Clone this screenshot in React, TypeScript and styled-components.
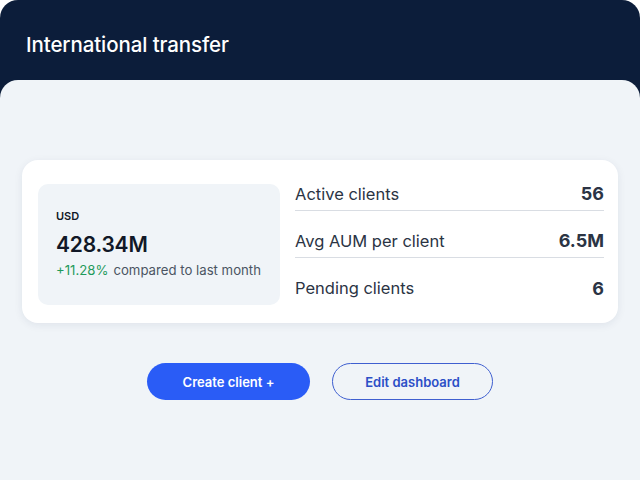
import styled, { createGlobalStyle } from "styled-components";

const GlobalStyle = createGlobalStyle`
  html, body {
    margin: 0;
    padding: 0;
    background: #ffffff;
  }
  body {
    font-family: Inter, "Noto Sans", sans-serif;
  }
`;

const Frame = styled.div`
  width: 640px;
  height: 480px;
  background: #0c1d3a;
  border-radius: 18px 18px 0 0;
  display: flex;
  flex-direction: column;
  overflow: hidden;
`;

const Header = styled.header`
  height: 80px;
  box-sizing: border-box;
  padding: 32px 26px 0;
`;

const Title = styled.h1`
  margin: 0;
  color: #ffffff;
  font-size: 20.5px;
  font-weight: 500;
  letter-spacing: -0.1px;
`;

const Panel = styled.main`
  flex: 1;
  background: #f0f4f8;
  border-radius: 18px 18px 0 0;
  padding: 80px 22px 0;
  display: flex;
  flex-direction: column;
  align-items: center;
`;

const Card = styled.section`
  align-self: stretch;
  height: 163px;
  box-sizing: border-box;
  background: #ffffff;
  border-radius: 16px;
  box-shadow: 0 2px 8px rgba(20, 40, 80, 0.08);
  padding: 24px 14px 26px 16px;
  display: grid;
  grid-template-columns: 242px 1fr;
  gap: 15px;
`;

const Balance = styled.div`
  background: #f0f4f8;
  border-radius: 10px;
  padding: 0 0 2px 18px;
  display: flex;
  flex-direction: column;
  justify-content: center;
`;

const Currency = styled.div`
  font-size: 11px;
  font-weight: 600;
  color: #111827;
`;

const Amount = styled.div`
  margin-top: 9px;
  font-size: 21px;
  font-weight: 600;
  color: #111827;
  letter-spacing: -0.2px;
`;

const Change = styled.div`
  margin-top: 5px;
  font-size: 13.2px;
  white-space: nowrap;
  color: #4b5563;
`;

const Up = styled.span`
  color: #1f9a5c;
  margin-right: 5px;
`;

const Stats = styled.ul`
  list-style: none;
  margin: -20px 0 0;
  padding: 0;
  display: flex;
  flex-direction: column;
`;

const StatRow = styled.li<{ $last?: boolean }>`
  height: 47px;
  box-sizing: border-box;
  padding-top: 13px;
  display: flex;
  align-items: center;
  justify-content: space-between;
  border-bottom: ${(p) => (p.$last ? "none" : "1.5px solid #d9dde3")};
  font-size: 16.5px;
  color: #2b3444;
`;

const StatValue = styled.span`
  font-size: 18px;
  font-weight: 700;
  color: #2b3444;
`;

const Actions = styled.div`
  margin-top: 40px;
  display: flex;
  gap: 22px;
`;

const Button = styled.button<{ $primary?: boolean }>`
  width: ${(p) => (p.$primary ? "163px" : "161px")};
  height: 37px;
  border-radius: 999px;
  font-family: inherit;
  font-size: 13px;
  font-weight: 600;
  cursor: pointer;
  background: ${(p) => (p.$primary ? "#2a5cf6" : "transparent")};
  color: ${(p) => (p.$primary ? "#ffffff" : "#2c4fc7")};
  border: ${(p) => (p.$primary ? "none" : "1px solid #3f5fd0")};
`;

const stats = [
  { label: "Active clients", value: "56" },
  { label: "Avg AUM per client", value: "6.5M" },
  { label: "Pending clients", value: "6" },
];

export default function App() {
  return (
    <>
      <GlobalStyle />
      <Frame>
        <Header>
          <Title>International transfer</Title>
        </Header>
        <Panel>
          <Card>
            <Balance>
              <Currency>USD</Currency>
              <Amount>428.34M</Amount>
              <Change>
                <Up>+11.28%</Up>compared to last month
              </Change>
            </Balance>
            <Stats>
              {stats.map((s, i) => (
                <StatRow key={s.label} $last={i === stats.length - 1}>
                  <span>{s.label}</span>
                  <StatValue>{s.value}</StatValue>
                </StatRow>
              ))}
            </Stats>
          </Card>
          <Actions>
            <Button $primary>Create client +</Button>
            <Button>Edit dashboard</Button>
          </Actions>
        </Panel>
      </Frame>
    </>
  );
}
